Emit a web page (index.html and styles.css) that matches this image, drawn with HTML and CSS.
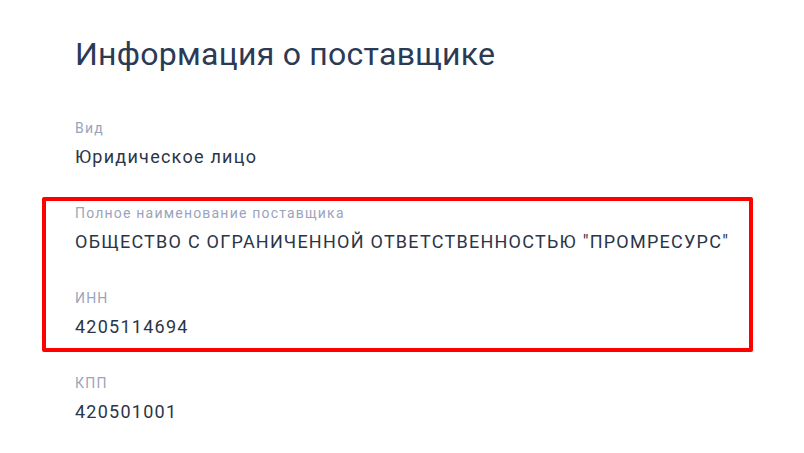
FILE: index.html
```html
<!DOCTYPE html>
<html>
<head>
  <title>Информация о поставщике</title>
  <link rel="stylesheet" href="styles.css">
</head>
<body>
  <div class="page">
    <h1>Информация о поставщике</h1>

    <div class="field">
      <div class="label">Вид</div>
      <div class="value">Юридическое лицо</div>
    </div>

    <div class="highlight">
      <div class="field">
        <div class="label">Полное наименование поставщика</div>
        <div class="value">ОБЩЕСТВО С ОГРАНИЧЕННОЙ ОТВЕТСТВЕННОСТЬЮ "ПРОМРЕСУРС"</div>
      </div>
      <div class="field">
        <div class="label">ИНН</div>
        <div class="value">4205114694</div>
      </div>
    </div>

    <div class="field">
      <div class="label">КПП</div>
      <div class="value">420501001</div>
    </div>
  </div>
</body>
</html>
```

FILE: styles.css
```css
body {
  margin: 0;
  font-family: Roboto, "Liberation Sans", Arial, sans-serif;
  background-color: #ffffff;
}

.page {
  padding: 34px 0 0 75px;
}

h1 {
  margin: 0 0 44px 0;
  font-size: 32px;
  line-height: 40px;
  font-weight: 400;
  letter-spacing: 0.26px;
  color: #2b3a55;
}

.field {
  margin-bottom: 32px;
}

.field:last-child {
  margin-bottom: 0;
}

.label {
  font-size: 14px;
  line-height: 20px;
  letter-spacing: 1.2px;
  color: #9aa4bc;
  margin-bottom: 5px;
}

.value {
  font-size: 18px;
  line-height: 28px;
  letter-spacing: 1.25px;
  color: #2b3548;
}

.highlight {
  width: 674px;
  margin: -6px 0 21px -33px;
  padding: 2px 0 7px 29px;
  border: 4px solid #ff0000;
  border-radius: 2px;
}
```
